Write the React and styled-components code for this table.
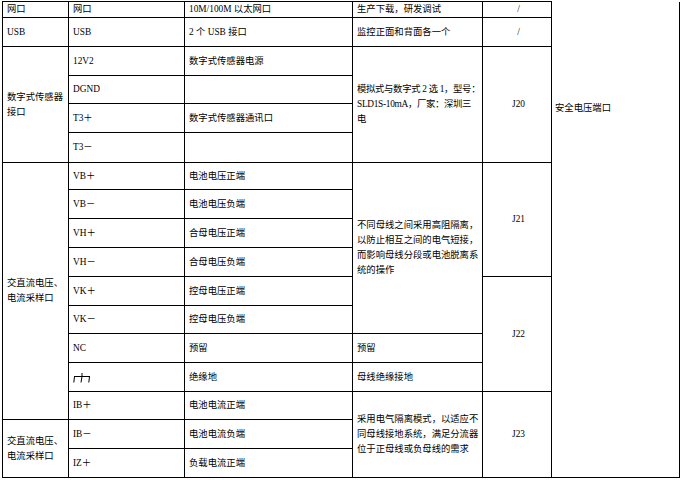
import styled, { createGlobalStyle } from "styled-components";

const GlobalStyle = createGlobalStyle`
  html, body {
    margin: 0;
    padding: 0;
    background: #fff;
  }
  body {
    font-family: "Liberation Serif", "Noto Sans CJK SC", serif;
    color: #000;
  }
`;

const Sheet = styled.table`
  width: 678px;
  border-collapse: collapse;
  table-layout: fixed;
  margin: 1px 0 0 2px;
  font-size: 9.33px;
  line-height: 15px;
`;

const Col = styled.col`
  width: ${(p) => p.$w}px;
`;

const Row = styled.tr`
  height: ${(p) => p.$h}px;
`;

const Cell = styled.td`
  border: 1px solid #000;
  padding: 0 1px 0 4px;
  vertical-align: middle;
  text-align: ${(p) => (p.$center ? "center" : "left")};
  letter-spacing: ${(p) => (p.$tight ? "-0.3px" : "normal")};
  white-space: nowrap;
`;

// last column, spans the whole table and starts above the visible part
const SideCell = styled(Cell)`
  border-top: none;
  vertical-align: top;
  padding-top: 99px;
  padding-left: 3px;
`;

const GroundIcon = styled.svg`
  display: block;
  margin-top: 1px;
`;

const Ground = () => (
  <GroundIcon width="18" height="10" viewBox="0 0 18 10">
    <g stroke="#000" strokeWidth="1" fill="none">
      <path d="M1 3.5H17" />
      <path d="M9 0V3.5L8 9.5" />
      <path d="M1.5 3.5L0.8 9.5" />
      <path d="M16.5 3.5L15.8 9.5" />
    </g>
  </GroundIcon>
);

const App = () => {
  return (
    <>
      <GlobalStyle />
      <Sheet>
        <colgroup>
          <Col $w={66} />
          <Col $w={116} />
          <Col $w={168} />
          <Col $w={130} />
          <Col $w={69} />
          <Col $w={128} />
        </colgroup>
        <tbody>
          <Row $h={16}>
            <Cell>网口</Cell>
            <Cell>网口</Cell>
            <Cell>10M/100M 以太网口</Cell>
            <Cell>生产下载，研发调试</Cell>
            <Cell $center>/</Cell>
            <SideCell rowSpan={17}>安全电压端口</SideCell>
          </Row>
          <Row $h={29}>
            <Cell>USB</Cell>
            <Cell>USB</Cell>
            <Cell>2 个 USB 接口</Cell>
            <Cell>监控正面和背面各一个</Cell>
            <Cell $center>/</Cell>
          </Row>

          <Row $h={29}>
            <Cell rowSpan={4}>
              数字式传感器
              <br />
              接口
            </Cell>
            <Cell>12V2</Cell>
            <Cell>数字式传感器电源</Cell>
            <Cell rowSpan={4} $tight>
              模拟式与数字式 2 选 1，型号：
              <br />
              SLD1S-10mA，厂家：深圳三
              <br />
              电
            </Cell>
            <Cell rowSpan={4} $center>
              J20
            </Cell>
          </Row>
          <Row $h={28}>
            <Cell>DGND</Cell>
            <Cell />
          </Row>
          <Row $h={29}>
            <Cell>T3＋</Cell>
            <Cell>数字式传感器通讯口</Cell>
          </Row>
          <Row $h={30}>
            <Cell>T3－</Cell>
            <Cell />
          </Row>

          <Row $h={27}>
            <Cell rowSpan={9}>
              交直流电压、
              <br />
              电流采样口
            </Cell>
            <Cell>VB＋</Cell>
            <Cell>电池电压正端</Cell>
            <Cell rowSpan={6}>
              不同母线之间采用高阻隔离，
              <br />
              以防止相互之间的电气短接，
              <br />
              而影响母线分段或电池脱离系
              <br />
              统的操作
            </Cell>
            <Cell rowSpan={4} $center>
              J21
            </Cell>
          </Row>
          <Row $h={29}>
            <Cell>VB－</Cell>
            <Cell>电池电压负端</Cell>
          </Row>
          <Row $h={29}>
            <Cell>VH＋</Cell>
            <Cell>合母电压正端</Cell>
          </Row>
          <Row $h={29}>
            <Cell>VH－</Cell>
            <Cell>合母电压负端</Cell>
          </Row>
          <Row $h={29}>
            <Cell>VK＋</Cell>
            <Cell>控母电压正端</Cell>
            <Cell rowSpan={4} $center>
              J22
            </Cell>
          </Row>
          <Row $h={28}>
            <Cell>VK－</Cell>
            <Cell>控母电压负端</Cell>
          </Row>
          <Row $h={29}>
            <Cell>NC</Cell>
            <Cell>预留</Cell>
            <Cell>预留</Cell>
          </Row>
          <Row $h={29}>
            <Cell>
              <Ground />
            </Cell>
            <Cell>绝缘地</Cell>
            <Cell>母线绝缘接地</Cell>
          </Row>
          <Row $h={28}>
            <Cell>IB＋</Cell>
            <Cell>电池电流正端</Cell>
            <Cell rowSpan={3}>
              采用电气隔离模式，以适应不
              <br />
              同母线接地系统，满足分流器
              <br />
              位于正母线或负母线的需求
            </Cell>
            <Cell rowSpan={3} $center>
              J23
            </Cell>
          </Row>

          <Row $h={29}>
            <Cell rowSpan={2}>
              交直流电压、
              <br />
              电流采样口
            </Cell>
            <Cell>IB－</Cell>
            <Cell>电池电流负端</Cell>
          </Row>
          <Row $h={29}>
            <Cell>IZ＋</Cell>
            <Cell>负载电流正端</Cell>
          </Row>
        </tbody>
      </Sheet>
    </>
  );
};

export default App;
